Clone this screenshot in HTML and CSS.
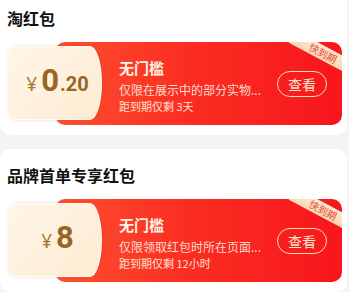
FILE: index.html
```html
<!DOCTYPE html>
<html lang="zh-CN">
<head>
<meta charset="utf-8">
<title>红包</title>
<link rel="stylesheet" href="styles.css">
</head>
<body>
<div class="page">
  <section class="card">
    <h2 class="card-title">淘红包</h2>
    <div class="coupon">
      <div class="stub">
        <span class="cur">¥</span><span class="int">0</span><span class="dec">.20</span>
      </div>
      <div class="info">
        <div class="name">无门槛</div>
        <div class="desc">仅限在展示中的部分实物...</div>
        <div class="exp">距到期仅剩 3天</div>
      </div>
      <button class="btn">查看</button>
      <div class="clip"><div class="band"></div></div>
      <span class="tag">快到期</span>
    </div>
  </section>
  <section class="card">
    <h2 class="card-title">品牌首单专享红包</h2>
    <div class="coupon">
      <div class="stub">
        <span class="cur">¥</span><span class="int">8</span>
      </div>
      <div class="info">
        <div class="name">无门槛</div>
        <div class="desc">仅限领取红包时所在页面...</div>
        <div class="exp">距到期仅剩 12小时</div>
      </div>
      <button class="btn">查看</button>
      <div class="clip"><div class="band"></div></div>
      <span class="tag">快到期</span>
    </div>
  </section>
</div>
</body>
</html>
```
FILE: styles.css
```css
html, body {
  margin: 0;
  padding: 0;
  background: #f4f4f4;
  font-family: "Noto Sans CJK SC", "Noto Sans", sans-serif;
}
.page {
  margin: -8px 2px 0 0;
  display: flex;
  flex-direction: column;
  gap: 14px;
}
.card {
  background: #fff;
  border-radius: 10px;
  padding: 15px 5px 10px 7px;
}
.card-title {
  margin: 0 0 13px 0;
  font-size: 16px;
  line-height: 22px;
  font-weight: 700;
  color: #111;
}
.coupon {
  position: relative;
  margin-left: 48px;
  height: 83px;
  border-radius: 10px;
  background: linear-gradient(90deg, #ff5030 0%, #fb2e22 45%, #f7161c 100%);
  display: flex;
  align-items: flex-start;
}
.stub {
  position: relative;
  z-index: 2;
  flex: none;
  width: 95px;
  height: 74px;
  margin: 4px 0 0 -48px;
  box-sizing: border-box;
  border: 1px solid rgba(255, 255, 255, 0.75);
  border-radius: 9px 12px 12px 9px / 9px 50% 50% 9px;
  background: linear-gradient(135deg, #fff6e8 0%, #fdebd2 100%);
  box-shadow: 1px 0 3px rgba(160, 60, 20, 0.25);
  display: flex;
  align-items: baseline;
  justify-content: center;
  padding-top: 16px;
  padding-left: 6px;
  color: #9a6422;
  font-family: "Roboto", "Noto Sans", sans-serif;
}
.cur {
  font-size: 19px;
  font-weight: 400;
  color: #a8742e;
  margin-right: 4px;
  font-family: "Noto Sans", sans-serif;
}
.int {
  font-size: 31px;
  font-weight: 700;
  line-height: 36px;
}
.dec {
  font-size: 20px;
  font-weight: 700;
  margin-left: 1px;
}
.info {
  flex: 1;
  min-width: 0;
  padding: 16px 0 0 17px;
}
.name {
  font-size: 15px;
  line-height: 20px;
  font-weight: 700;
  color: #fff4e6;
}
.desc {
  margin-top: 4px;
  font-size: 12px;
  line-height: 16px;
  color: #ffdccb;
  white-space: nowrap;
}
.exp {
  font-size: 11px;
  line-height: 16px;
  color: #ffe2d2;
  white-space: nowrap;
}
.btn {
  flex: none;
  align-self: center;
  width: 50px;
  height: 26px;
  margin-right: 15px;
  padding: 0;
  border: 1px solid #ffd8b6;
  border-radius: 13px;
  background: transparent;
  color: #ffe7cf;
  font-family: "Noto Sans CJK SC", sans-serif;
  font-size: 14px;
  line-height: 24px;
}
.clip {
  position: absolute;
  inset: 0;
  border-radius: 10px;
  overflow: hidden;
  pointer-events: none;
}
.band {
  position: absolute;
  top: 4px;
  right: -16px;
  width: 70px;
  height: 14px;
  transform: rotate(28deg);
  background: linear-gradient(180deg, #fee8cf, #fbd6b4);
}
.tag {
  position: absolute;
  top: 4px;
  right: 4px;
  width: 30px;
  height: 14px;
  transform: rotate(28deg);
  color: #e4503a;
  font-size: 10px;
  line-height: 14px;
  text-align: center;
  white-space: nowrap;
}
```
